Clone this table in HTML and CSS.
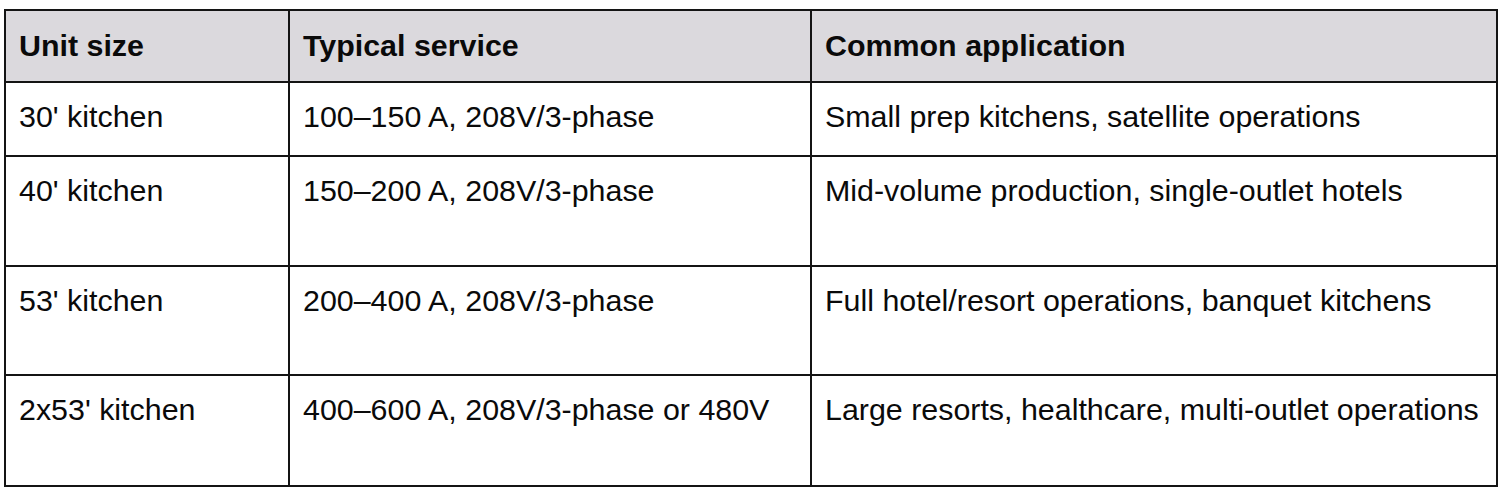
FILE: index.html
```html
<!DOCTYPE html>
<html lang="en">
<head>
<meta charset="utf-8">
<title>Kitchen unit sizes</title>
<link rel="stylesheet" href="styles.css">
</head>
<body>
<div class="table">
  <div class="cell head">Unit size</div>
  <div class="cell head">Typical service</div>
  <div class="cell head">Common application</div>

  <div class="cell">30' kitchen</div>
  <div class="cell">100–150 A, 208V/3-phase</div>
  <div class="cell">Small prep kitchens, satellite operations</div>

  <div class="cell">40' kitchen</div>
  <div class="cell">150–200 A, 208V/3-phase</div>
  <div class="cell">Mid-volume production, single-outlet hotels</div>

  <div class="cell">53' kitchen</div>
  <div class="cell">200–400 A, 208V/3-phase</div>
  <div class="cell">Full hotel/resort operations, banquet kitchens</div>

  <div class="cell">2x53' kitchen</div>
  <div class="cell">400–600 A, 208V/3-phase or 480V</div>
  <div class="cell">Large resorts, healthcare, multi-outlet operations</div>
</div>
</body>
</html>
```

FILE: styles.css
```css
html, body {
  margin: 0;
  padding: 0;
  background: #ffffff;
}

body {
  padding: 9px 0 0 4px;
  font-family: "Liberation Sans", Arial, Helvetica, sans-serif;
  color: #0a0a0a;
}

.table {
  display: grid;
  width: 1494px;
  box-sizing: border-box;
  grid-template-columns: 282px 520px 684px;
  grid-template-rows: 70px 72px 108px 107px 109px;
  gap: 2px;
  padding: 2px;
  background: #141414;
}

.cell {
  background: #ffffff;
  font-size: 30.4px;
  line-height: 34px;
  padding: 16px 13px 0 13px;
  white-space: nowrap;
}

.cell.head {
  background: #dbd9dd;
  font-weight: bold;
  padding-top: 17px;
}
```
